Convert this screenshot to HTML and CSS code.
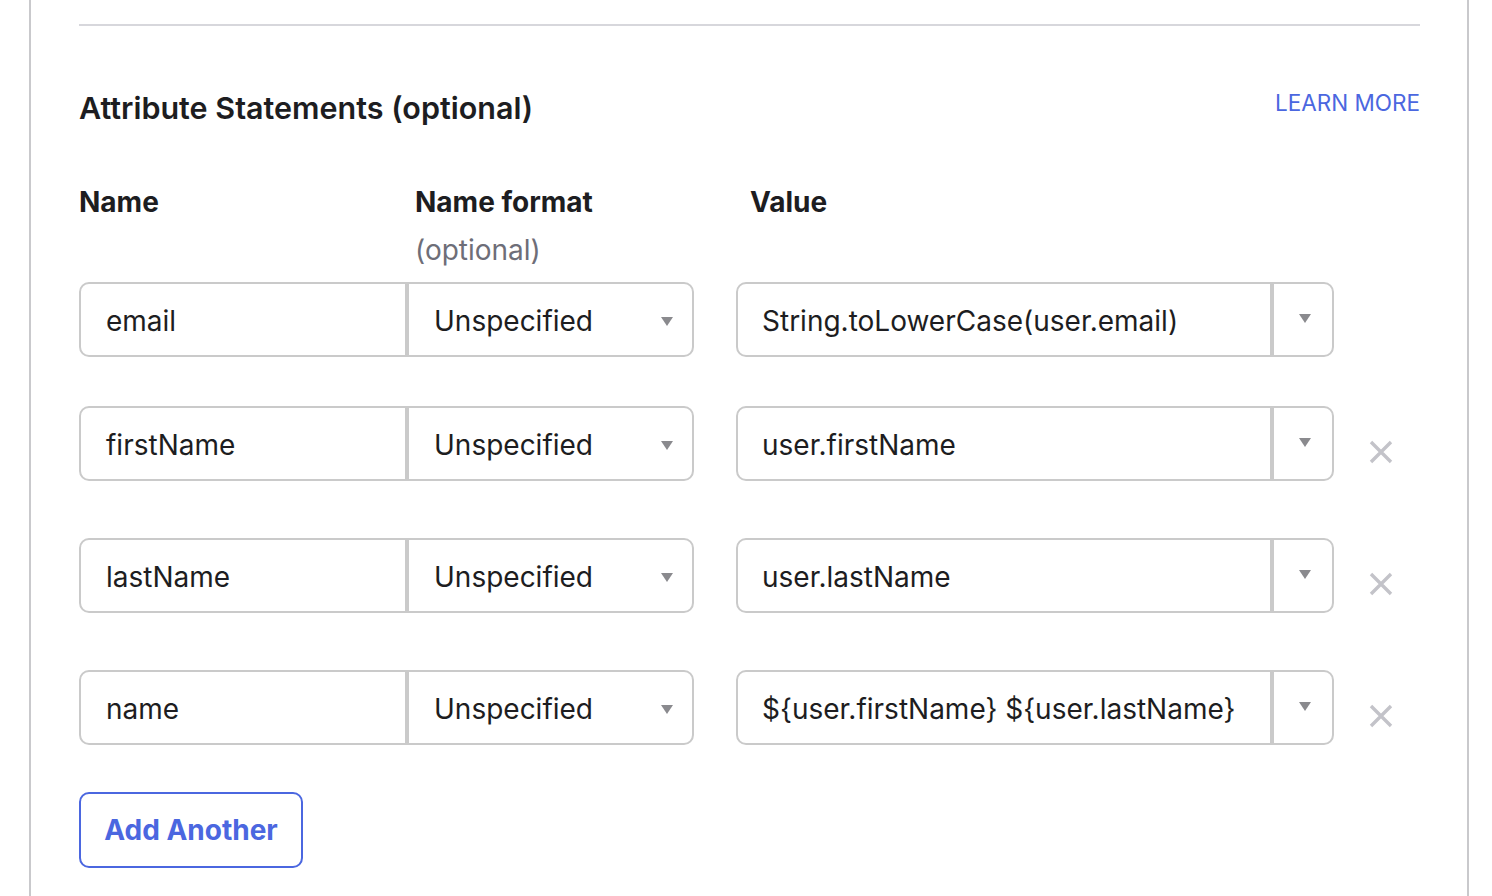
FILE: index.html
```html
<!DOCTYPE html>
<html lang="en">
<head>
<meta charset="utf-8">
<title>Attribute Statements</title>
<link rel="stylesheet" href="styles.css">
</head>
<body>
<div class="panel">
  <div class="divider"></div>
  <div class="section-head">
    <h2 class="title">Attribute Statements (optional)</h2>
    <a class="learn" href="#">LEARN MORE</a>
  </div>
  <div class="col-heads">
    <div class="col-head">Name</div>
    <div class="col-head">Name format<span class="sub">(optional)</span></div>
    <div class="col-head">Value</div>
  </div>
  <div class="rows">
    <div class="row">
      <div class="pair">
        <div class="name-input">email</div>
        <div class="format-select"><span>Unspecified</span><span class="caret"></span></div>
      </div>
      <div class="value-field"><div class="value-text">String.toLowerCase(user.email)</div><div class="value-btn"><span class="caret"></span></div></div>
    </div>
    <div class="row">
      <div class="pair">
        <div class="name-input">firstName</div>
        <div class="format-select"><span>Unspecified</span><span class="caret"></span></div>
      </div>
      <div class="value-field"><div class="value-text">user.firstName</div><div class="value-btn"><span class="caret"></span></div></div>
      <button class="remove" aria-label="Remove"><svg width="24" height="24" viewBox="0 0 24 24"><path d="M2 2L22 22M22 2L2 22" stroke="#c3c3c9" stroke-width="3.4" fill="none"/></svg></button>
    </div>
    <div class="row">
      <div class="pair">
        <div class="name-input">lastName</div>
        <div class="format-select"><span>Unspecified</span><span class="caret"></span></div>
      </div>
      <div class="value-field"><div class="value-text">user.lastName</div><div class="value-btn"><span class="caret"></span></div></div>
      <button class="remove" aria-label="Remove"><svg width="24" height="24" viewBox="0 0 24 24"><path d="M2 2L22 22M22 2L2 22" stroke="#c3c3c9" stroke-width="3.4" fill="none"/></svg></button>
    </div>
    <div class="row">
      <div class="pair">
        <div class="name-input">name</div>
        <div class="format-select"><span>Unspecified</span><span class="caret"></span></div>
      </div>
      <div class="value-field"><div class="value-text">${user.firstName} ${user.lastName}</div><div class="value-btn"><span class="caret"></span></div></div>
      <button class="remove" aria-label="Remove"><svg width="24" height="24" viewBox="0 0 24 24"><path d="M2 2L22 22M22 2L2 22" stroke="#c3c3c9" stroke-width="3.4" fill="none"/></svg></button>
    </div>
  </div>
  <button class="add">Add Another</button>
</div>
</body>
</html>
```
FILE: styles.css
```css
* { box-sizing: border-box; }
html, body { margin: 0; padding: 0; background: #fff; }
body {
  font-family: Inter, "Noto Sans", sans-serif;
  color: #1d1d21;
  height: 896px;
  overflow: hidden;
}
.panel {
  margin-left: 29px;
  width: 1440px;
  min-height: 896px;
  border-left: 2px solid #c9c9cc;
  border-right: 2px solid #c9c9cc;
  padding: 24px 47px 0 48px;
}
.divider {
  height: 2px;
  background: #d7d7dc;
}
.section-head {
  display: flex;
  justify-content: space-between;
  align-items: flex-start;
  margin-top: 64px;
}
.title {
  margin: 0;
  font-size: 30.5px;
  font-weight: 600;
  line-height: 36px;
  letter-spacing: 0;
  color: #1d1d21;
}
.learn {
  font-size: 22.5px;
  line-height: 28px;
  color: #4b67e0;
  text-decoration: none;
  margin-top: -1px;
}
.col-heads {
  display: grid;
  grid-template-columns: 336px 335px 1fr;
  margin-top: 52px;
}
.col-head {
  font-size: 28px;
  font-weight: 700;
  line-height: 48px;
  color: #1d1d21;
}
.sub {
  display: block;
  font-weight: 400;
  color: #6e6e78;
}
.rows {
  display: flex;
  flex-direction: column;
  gap: 49px;
  margin-top: 8px;
}
.row {
  display: flex;
  align-items: flex-start;
}
.pair {
  display: flex;
  width: 615px;
  height: 75px;
}
.name-input, .format-select, .value-text {
  font-size: 28px;
  line-height: 68px;
  padding-top: 3px;
  color: #1d1d21;
  white-space: nowrap;
}
.name-input {
  width: 328px;
  border: 2px solid #cacaca;
  border-radius: 10px 0 0 10px;
  padding-left: 25px;
}
.format-select {
  flex: 1;
  border: 2px solid #cacaca;
  border-radius: 0 10px 10px 0;
  padding-right: 19px;
  padding-left: 25px;
  display: flex;
  align-items: center;
  justify-content: space-between;
}
.caret {
  width: 0;
  height: 0;
  border-left: 6px solid transparent;
  border-right: 6px solid transparent;
  border-top: 9px solid #8a8a8e;
}
.value-btn .caret {
  margin-top: 2px;
}
.value-field {
  display: flex;
  width: 598px;
  height: 75px;
  margin-left: 42px;
  border: 2px solid #cacaca;
  border-radius: 10px;
}
.value-text {
  flex: 1;
  padding-left: 24px;
  border-right: 4px solid #cacaca;
}
.value-btn {
  width: 58px;
  display: flex;
  align-items: center;
  justify-content: center;
  padding: 0 0 4px 4px;
}
.remove {
  width: 74px;
  height: 74px;
  margin-top: 9px;
  margin-left: 10px;
  border: 0;
  background: transparent;
  padding: 0;
  display: flex;
  align-items: center;
  justify-content: center;
}
.add {
  margin-top: 39px;
  width: 224px;
  height: 76px;
  border: 2px solid #4b67e0;
  border-radius: 10px;
  background: #fff;
  color: #4b67e0;
  font-family: Inter, "Noto Sans", sans-serif;
  font-size: 28px;
  font-weight: 700;
  padding: 0;
}
```
